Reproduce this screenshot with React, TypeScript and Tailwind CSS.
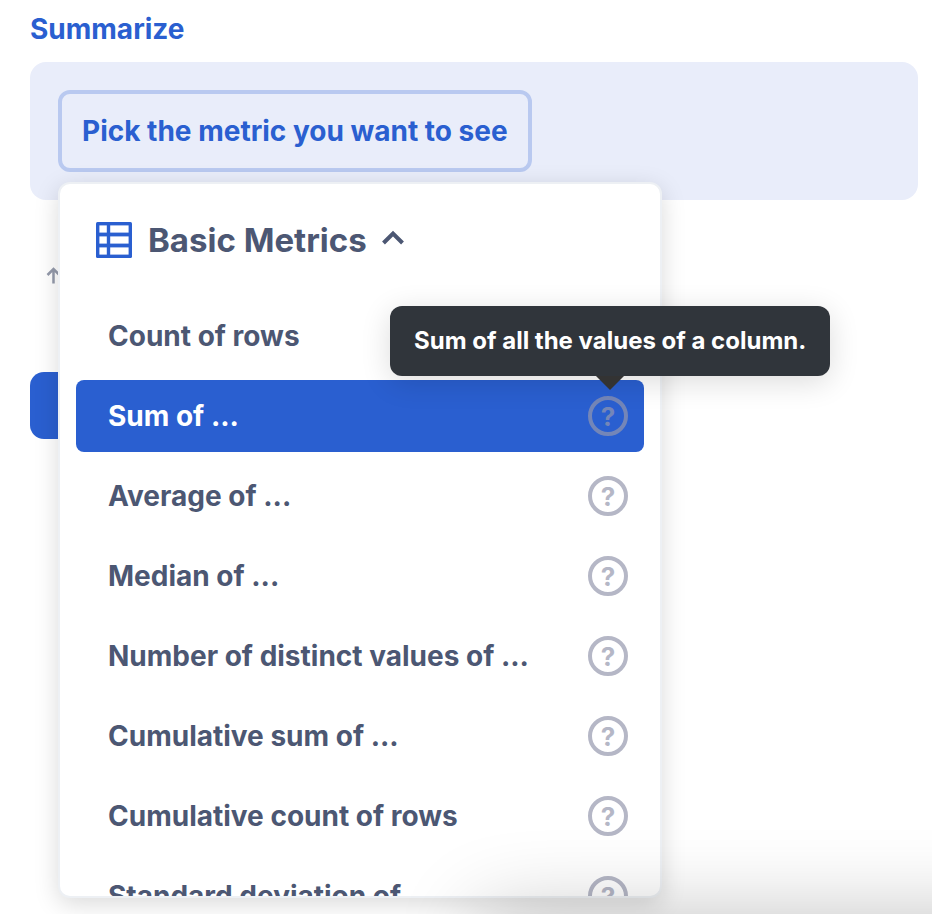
interface Metric {
  label: string;
  help?: string;
}

const metrics: Metric[] = [
  { label: "Count of rows" },
  { label: "Sum of ...", help: "Sum of all the values of a column." },
  { label: "Average of ...", help: "" },
  { label: "Median of ...", help: "" },
  { label: "Number of distinct values of ...", help: "" },
  { label: "Cumulative sum of ...", help: "" },
  { label: "Cumulative count of rows", help: "" },
  { label: "Standard deviation of ...", help: "" },
];

const SELECTED = "Sum of ...";

function TableIcon() {
  return (
    <svg viewBox="0 0 36 36" className="h-9 w-9 shrink-0" aria-hidden="true">
      <rect width="36" height="36" rx="1.5" fill="#2a5fd0" />
      <g fill="#fff">
        <rect x="3.4" y="3.4" width="7.4" height="7.2" />
        <rect x="14.2" y="3.4" width="18.4" height="7.2" />
        <rect x="3.4" y="14.4" width="7.4" height="7.2" />
        <rect x="14.2" y="14.4" width="18.4" height="7.2" />
        <rect x="3.4" y="25.4" width="7.4" height="7.2" />
        <rect x="14.2" y="25.4" width="18.4" height="7.2" />
      </g>
    </svg>
  );
}

function ChevronUp() {
  return (
    <svg viewBox="0 0 24 20" className="h-5 w-6" fill="none" stroke="#4c5773" strokeWidth="4" aria-hidden="true">
      <path d="M2.5 13 12 3.5l9.5 9.5" />
    </svg>
  );
}

function SortArrow() {
  return (
    <svg viewBox="0 0 16 20" className="h-5 w-4" fill="none" stroke="#949aab" strokeWidth="2.5" aria-hidden="true">
      <path d="M8.5 17.5v-14M2.5 9l6-6 6 6" />
    </svg>
  );
}

function HelpIcon({ active }: { active: boolean }) {
  return (
    <span
      className={
        active
          ? "flex h-10 w-10 items-center justify-center rounded-full border-4 border-[#7486b8] pt-0.5 text-[26px] text-[#7486b8]"
          : "flex h-10 w-10 items-center justify-center rounded-full border-4 border-[#b5b7c6] pt-0.5 text-[26px] text-[#b5b7c6]"
      }
    >
      ?
    </span>
  );
}

function MetricRow({ metric }: { metric: Metric }) {
  const active = metric.label === SELECTED;

  return (
    <li>
      <button
        type="button"
        className={
          active
            ? "flex h-[72px] w-full items-center justify-between rounded-lg bg-[#2a5fd0] pr-4 pl-8 text-left text-white"
            : "flex h-[72px] w-full items-center justify-between rounded-lg pr-4 pl-8 text-left"
        }
      >
        {metric.label}
        {metric.help !== undefined && <HelpIcon active={active} />}
      </button>
    </li>
  );
}

function Tooltip({ text }: { text: string }) {
  return (
    <div
      role="tooltip"
      className="absolute top-[124px] left-[332px] z-20 rounded-xl bg-[#30353b] px-6 py-[19px] text-2xl leading-8 whitespace-nowrap text-white shadow-[0_6px_30px_rgba(0,0,0,0.14)]"
    >
      {text}
      <svg viewBox="0 0 28 14" className="absolute top-full left-[206px] h-3.5 w-7" aria-hidden="true">
        <path d="M0 0h28L14 14z" fill="#333" />
      </svg>
    </div>
  );
}

function MetricPicker() {
  return (
    <div className="absolute top-full left-0 z-10 mt-2.5 w-[604px] text-[#4c5773]">
      <div className="h-[716px] overflow-hidden rounded-xl border-2 border-[#edf0f4] bg-white shadow-[0_6px_24px_rgba(0,0,0,0.15)]">
        <button type="button" className="flex w-full items-center px-9 pt-8 pb-9 text-[33px] leading-[48px]">
          <TableIcon />
          <span className="mr-3.5 ml-4">Basic Metrics</span>
          <ChevronUp />
        </button>
        <ul className="flex flex-col gap-2 px-4">
          {metrics.map((metric) => (
            <MetricRow key={metric.label} metric={metric} />
          ))}
        </ul>
      </div>
      <Tooltip text="Sum of all the values of a column." />
    </div>
  );
}

export default function App() {
  return (
    <main className="relative min-h-screen overflow-hidden bg-white pt-[9px] pr-3.5 pl-[30px] font-['Inter',sans-serif] text-[28px] leading-10 font-bold">
      <h2 className="text-[#2a5fd0]">Summarize</h2>

      <section className="mt-[13px] rounded-2xl bg-[#e9edfa] p-7">
        <div className="relative w-fit">
          <button
            type="button"
            className="block rounded-xl border-4 border-[#b9c9f0] px-5 py-[17px] text-[#2a5fd0]"
          >
            Pick the metric you want to see
          </button>
          <MetricPicker />
        </div>
      </section>

      <div className="mt-[66px] pl-[15px]">
        <button type="button" aria-label="Sort ascending" className="block">
          <SortArrow />
        </button>
      </div>

      <button type="button" aria-label="Visualize" className="mt-[86px] block h-[67px] w-52 rounded-[14px] bg-[#2a5fd0]" />

      {/* shade cast by the bar docked below the window */}
      <div className="pointer-events-none absolute top-full -right-40 left-[480px] z-30 h-60 shadow-[0_0_84px_rgba(0,0,0,0.24)]" />
    </main>
  );
}
